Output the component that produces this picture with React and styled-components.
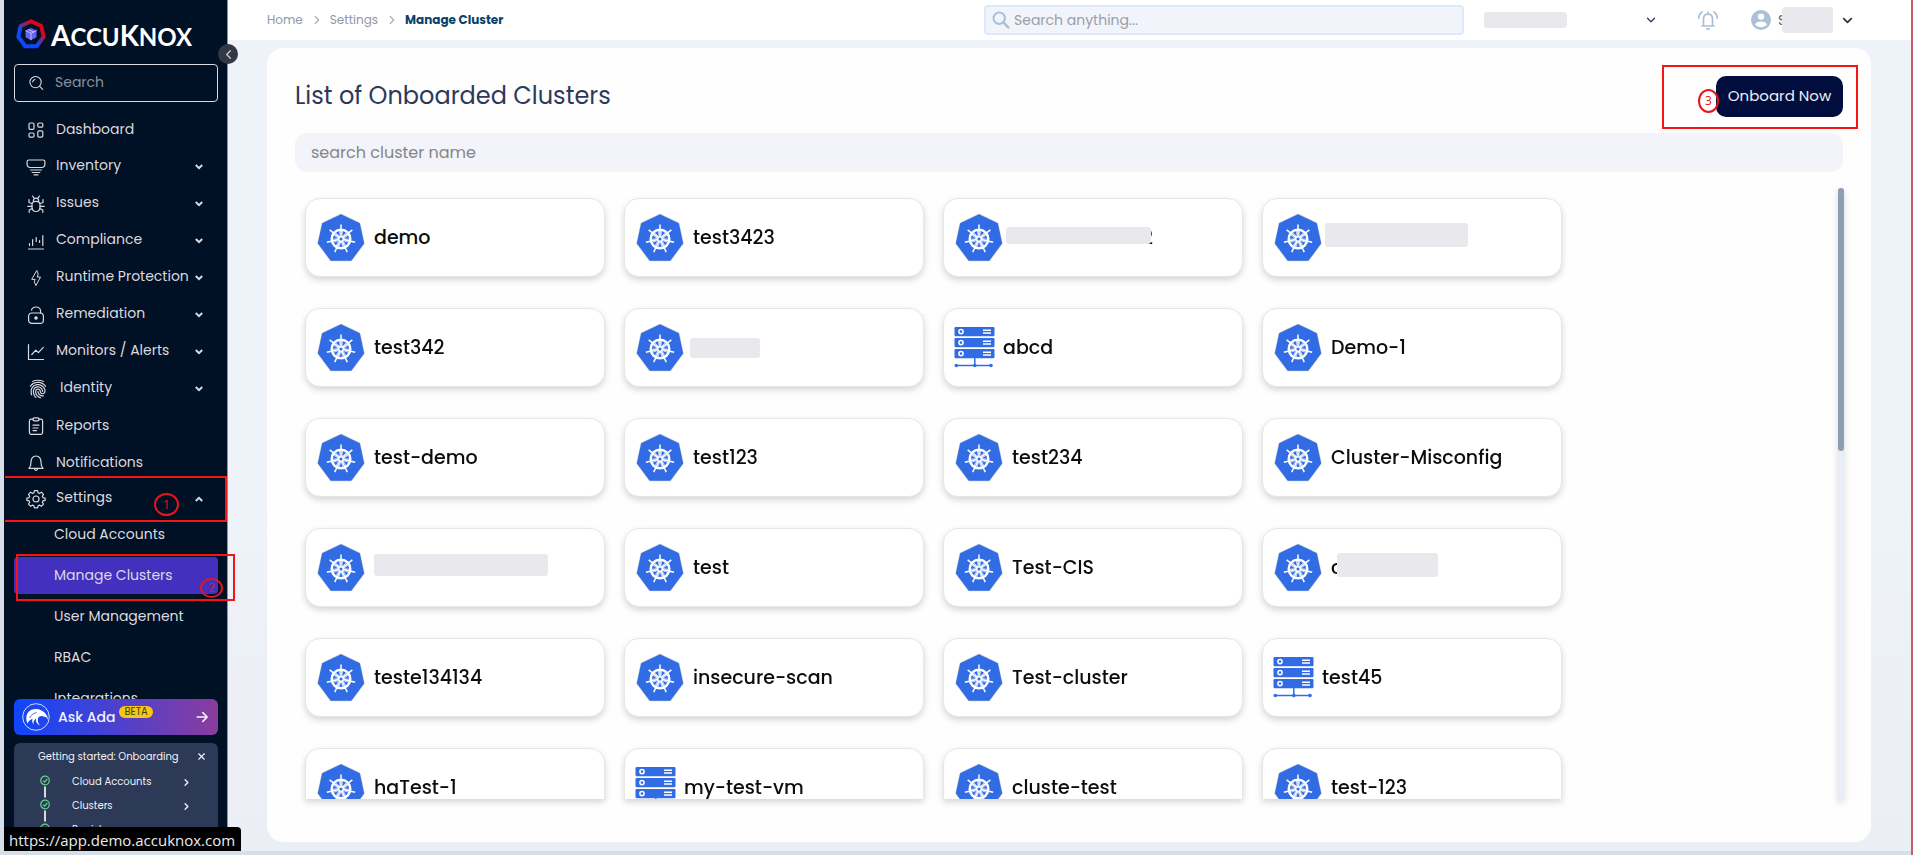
import React from "react";
import styled, { createGlobalStyle, css } from "styled-components";
import { ChevronDown, ChevronLeft, ChevronRight, X } from "lucide-react";
import { IoFingerPrint } from "react-icons/io5";

const GlobalStyle = createGlobalStyle`
  *, *::before, *::after { box-sizing: border-box; }
  body {
    margin: 0;
    font-family: Poppins, Inter, "Liberation Sans", sans-serif;
    background: #d6dfe9;
  }
  button, input { font-family: inherit; }
  a { color: inherit; text-decoration: none; }
  ul, ol { list-style: none; margin: 0; padding: 0; }
`;

const Frame = styled.div`
  display: flex;
  height: 100vh;
  padding: 0 0 4px 4px;
  border-right: 2px solid #c65c6a;
  background: #d6dfe9;
`;

/* ---------- annotations ---------- */

const MarkBox = styled.span`
  position: absolute;
  z-index: 3;
  inset: ${(p) => p.$inset};
  border: 2px solid #f81414;
  border-left-width: ${(p) => (p.$openLeft ? 0 : 2)}px;
  pointer-events: none;
`;

const MarkNumber = styled.span`
  position: absolute;
  z-index: 3;
  left: ${(p) => p.$left}px;
  top: ${(p) => p.$top}px;
  width: ${(p) => p.$width}px;
  height: ${(p) => p.$height}px;
  display: flex;
  align-items: center;
  justify-content: center;
  border: 2px solid #e8141c;
  border-radius: 50%;
  color: #e8141c;
  font-family: "Open Sans", sans-serif;
  font-size: 12px;
  line-height: 12px;
  pointer-events: none;
`;

const Redaction = styled.span`
  width: ${(p) => p.$width}px;
  height: ${(p) => p.$height}px;
  border-radius: 3px;
  background: #e9e8ed;
  ${(p) =>
    p.$left !== undefined &&
    css`
      position: absolute;
      left: ${p.$left}px;
      top: ${p.$top}px;
    `}
`;

/* ---------- sidebar ---------- */

const Sidebar = styled.aside`
  position: relative;
  flex: none;
  width: 224px;
  display: flex;
  flex-direction: column;
  padding: 19px 9px 0 10px;
  background: #001025;
  border-right: 1px solid #8a93a3;
  color: #dcd9df;
`;

const Brand = styled.a`
  display: flex;
  align-items: center;
  gap: 5px;
  height: 30px;
  margin: 0 0 15px 2px;
  color: #fff;
  font-family: Lato, sans-serif;
  font-weight: 700;
  font-size: 24px;
  line-height: 30px;
  text-transform: uppercase;
`;

const BrandText = styled.span`
  padding-top: 3px;
`;

const BigLetter = styled.span`
  font-size: 28px;
`;

const Collapse = styled.button`
  position: absolute;
  z-index: 4;
  right: -11px;
  top: 44px;
  width: 20px;
  height: 20px;
  display: flex;
  align-items: center;
  justify-content: center;
  padding: 0;
  border: 0;
  border-radius: 50%;
  background: #333845;
  color: #c9ccd3;
`;

const MenuSearch = styled.label`
  flex: none;
  display: flex;
  align-items: center;
  gap: 10px;
  height: 38px;
  margin-bottom: 9px;
  padding: 0 12px;
  border: 1px solid #d9dbe0;
  border-radius: 4px;
`;

const MenuSearchInput = styled.input`
  flex: 1;
  min-width: 0;
  padding: 0 0 2px;
  border: 0;
  outline: 0;
  background: none;
  color: #fff;
  font-size: 14px;
  &::placeholder { color: #8b919c; opacity: 1; }
`;

/* Wider than the sidebar on the right, so that marks may reach past its edge. */
const Nav = styled.nav`
  flex: 1;
  min-height: 0;
  margin: 0 -30px 0 -10px;
  padding: 0 30px 0 10px;
  overflow: hidden;
`;

const NavItem = styled.li`
  position: relative;
`;

const NavHead = styled.div`
  position: relative;
`;

const rowStyle = css`
  display: flex;
  align-items: center;
  gap: 10px;
  width: 100%;
  height: ${(p) => (p.$open ? 35 : 37)}px;
  padding: 0 15px 0 12px;
  border: 0;
  background: none;
  color: inherit;
  font-size: 14px;
  text-align: left;
`;

const NavLink = styled.a`${rowStyle}`;
const NavButton = styled.button`${rowStyle}`;

const NavLabel = styled.span`
  flex: 1;
  min-width: 0;
  white-space: nowrap;
  padding-bottom: ${(p) => (p.$raised ? 3 : 0)}px;
`;

const SubList = styled.ul`
  display: flex;
  flex-direction: column;
  gap: 4px;
`;

const SubLink = styled.a`
  display: flex;
  align-items: center;
  height: 37px;
  padding-left: 40px;
  border-radius: 4px;
  font-size: 14px;
  background: ${(p) => (p.$active ? "#4430bf" : "none")};
`;

const AskAda = styled.button`
  flex: none;
  display: flex;
  align-items: center;
  height: 36px;
  margin-bottom: 8px;
  padding: 0 8px;
  border: 0;
  border-radius: 6px;
  background: linear-gradient(90deg, #0f46fd 0%, #3f42d8 40%, #8b3c9d 100%);
  color: #f3f0fa;
  font-size: 14px;
  font-weight: 500;
`;

const AskLabel = styled.span`
  margin: 0 4px 0 8px;
`;

const Beta = styled.span`
  align-self: flex-start;
  margin: 7px auto 0 0;
  padding: 0 5px;
  border-radius: 6px;
  background: #f6c815;
  color: #3d3a20;
  font-size: 10px;
  font-weight: 400;
  line-height: 12px;
`;

const Onboarding = styled.section`
  flex: none;
  height: 108px;
  overflow: hidden;
  padding: 4px 11px 0 24px;
  border-radius: 6px 6px 0 0;
  background: #2c3957;
  color: #f0f1f5;
`;

const OnboardingHead = styled.header`
  display: flex;
  align-items: center;
  justify-content: space-between;
  height: 19px;
`;

const OnboardingTitle = styled.h2`
  margin: 0;
  font-size: 10px;
  font-weight: 400;
  white-space: nowrap;
`;

const PlainButton = styled.button`
  display: flex;
  padding: 0;
  border: 0;
  background: none;
  color: inherit;
`;

const Steps = styled.ol`
  padding: 9px 0 0 2px;
`;

const Step = styled.li`
  display: flex;
  align-items: flex-start;
  height: 24px;
  font-size: 10px;
`;

const StepLink = styled.a`
  flex: 1;
  display: flex;
  align-items: center;
  justify-content: space-between;
  height: 14px;
  padding: 0 15px 0 22px;
`;

const UrlTip = styled.div`
  position: absolute;
  z-index: 5;
  left: 0;
  bottom: 0;
  height: 24px;
  padding: 0 6px 0 5px;
  border-radius: 0 4px 0 0;
  background: #000;
  color: #ececec;
  font-family: "Open Sans", sans-serif;
  font-size: 15px;
  line-height: 26px;
  white-space: nowrap;
`;

/* ---------- main area ---------- */

const Main = styled.main`
  flex: 1;
  min-width: 0;
  display: flex;
  flex-direction: column;
  background: linear-gradient(180deg, #eff3f9 0%, #eef2f9 60%, #ebeef4 100%);
`;

const TopBar = styled.header`
  flex: none;
  display: flex;
  align-items: center;
  height: 40px;
  padding: 0 56px 0 39px;
  background: #fff;
`;

const CrumbNav = styled.nav`
  margin-right: auto;
`;

const Crumbs = styled.ol`
  display: flex;
  align-items: center;
  font-size: 12px;
  color: #8f99a8;
`;

const Crumb = styled.li`
  display: flex;
  align-items: center;
  color: ${(p) => (p.$current ? "#0b426d" : "inherit")};
  font-weight: ${(p) => (p.$current ? 700 : 400)};
  & > svg { margin: 0 6px 0 7px; color: #a3afc0; }
`;

const GlobalSearch = styled.label`
  display: flex;
  align-items: center;
  gap: 4px;
  width: 480px;
  height: 30px;
  padding: 0 6px;
  border: 2px solid #dfe9fd;
  border-radius: 4px;
  background: #f1f4fa;
`;

const GlobalInput = styled.input`
  flex: 1;
  min-width: 0;
  padding: 0;
  border: 0;
  outline: 0;
  background: none;
  font-size: 14px;
  &::placeholder { color: #9a9ea6; opacity: 1; }
`;

const TenantButton = styled.button`
  display: flex;
  align-items: center;
  justify-content: space-between;
  width: 174px;
  margin-left: 20px;
  padding: 0;
  border: 0;
  background: none;
  color: #2c3a5a;
`;

const BellButton = styled(PlainButton)`
  margin-left: 40px;
  color: #abc0d6;
`;

const UserButton = styled(PlainButton)`
  position: relative;
  align-items: center;
  margin-left: 33px;
  color: #333;
  font-size: 14px;
  & > svg:last-child { margin-left: 7px; }
`;

const Initial = styled.span`
  width: 11px;
  padding-left: 7px;
  overflow: hidden;
  color: #666;
`;

const Panel = styled.section`
  flex: 1;
  min-height: 0;
  display: flex;
  flex-direction: column;
  margin: 8px 40px 9px 39px;
  padding: 28px 28px 43px;
  border-radius: 16px;
  background: #fefefe;
`;

const PanelHead = styled.header`
  flex: none;
  display: flex;
  align-items: center;
  justify-content: space-between;
  height: 41px;
  margin-bottom: 16px;
`;

const Title = styled.h1`
  margin: 0;
  padding-bottom: 2px;
  color: #2c395b;
  font-size: 24px;
  font-weight: 400;
`;

const OnboardArea = styled.div`
  position: relative;
`;

const OnboardButton = styled.button`
  display: block;
  width: 127px;
  height: 41px;
  padding: 0 0 2px;
  border: 0;
  border-radius: 10px;
  background: #010d3d;
  color: #eceef4;
  font-size: 15px;
  font-weight: 400;
  white-space: nowrap;
`;

const ClusterSearch = styled.input`
  flex: none;
  height: 39px;
  margin-bottom: 16px;
  padding: 0 16px;
  border: 0;
  border-radius: 12px;
  background: #f3f4f9;
  font-size: 16px;
  &::placeholder { color: #858589; opacity: 1; }
`;

const ListArea = styled.div`
  flex: 1;
  min-height: 0;
  display: flex;
  filter: drop-shadow(0 3px 3px rgba(0, 0, 0, 0.16));
`;

const ClusterGrid = styled.ul`
  flex: 1;
  display: grid;
  grid-template-columns: repeat(auto-fill, 300px);
  grid-auto-rows: 79px;
  gap: 31px 19px;
  padding: 10px 0 0 10px;
  overflow-y: auto;
  scrollbar-width: none;
`;

const ClusterCard = styled.li`
  display: flex;
  align-items: center;
  gap: ${(p) => (p.$vm ? 8 : 9)}px;
  padding: 0 ${(p) => (p.$vm ? 10 : 11)}px;
  border: 1px solid #e6e6e6;
  border-radius: 15px;
  background: #fff;
`;

const ClusterName = styled.span`
  position: relative;
  min-height: 24px;
  line-height: 24px;
  color: #0d0d0d;
  font-size: 19px;
  font-weight: 500;
  white-space: nowrap;
`;

const HiddenName = styled.span`
  display: inline-block;
  width: 130px;
`;

const Track = styled.div`
  flex: none;
  width: 6px;
  margin-right: -1px;
  background: #e9eef6;
`;

const Thumb = styled.div`
  height: 43%;
  border-radius: 3px;
  background: #8c9db4;
`;

/* ---------- drawings ---------- */

function Glyph({ size = 20, children, width = 1.2 }) {
  return (
    <svg
      width={size}
      height={size}
      viewBox="0 0 20 20"
      fill="none"
      stroke="currentColor"
      strokeWidth={width}
      strokeLinecap="round"
      strokeLinejoin="round"
      aria-hidden="true"
    >
      {children}
    </svg>
  );
}

const FingerIcon = styled(IoFingerPrint)`
  flex: none;
  margin: 2px;
`;

const icons = {
  dashboard: (
    <Glyph>
      <rect x="3" y="3" width="5" height="6.4" rx="1.2" />
      <rect x="11.8" y="3" width="5" height="4.2" rx="1.2" />
      <rect x="3" y="13" width="5" height="4.2" rx="1.2" />
      <rect x="11.8" y="10.8" width="5" height="6.4" rx="1.2" />
    </Glyph>
  ),
  inventory: (
    <Glyph>
      <path d="M2.8 3h14.4c1.100 0 1.700.6 1.700 1.600v2.400c0 2.300-1.100 3.500-3.200 3.500H4.300C2.200 10.500 1.100 9.300 1.100 7V4.600C1.100 3.600 1.700 3 2.800 3z" />
      <path d="M4.500 13h11M6.200 15.500h7.600M8 17.800h4" />
    </Glyph>
  ),
  issues: (
    <Glyph>
      <path d="M6 10.500c0-2 1.400-3.200 4-3.200s4 1.200 4 3.200v2.800c0 2.500-1.600 4.200-4 4.200s-4-1.700-4-4.200z" />
      <path d="M7.300 7.200c0-2 1-3 2.700-3s2.700 1 2.700 3M8.200 4.300 6.600 2M11.800 4.300 13.400 2" />
      <path d="M6 9.500 3 8.500V5.500M14 9.500l3-1V5.500M6 12.300H1.800M14 12.300h4.200M6.300 14.600 3.200 16v2.300M13.700 14.600l3.100 1.400v2.300" />
    </Glyph>
  ),
  compliance: (
    <Glyph>
      <path d="M3.500 12.500v2M6.600 8.500v6M10.200 6.500v4M13.600 9.500v2M16.800 4.500v10" />
      <path d="M2.500 18h15" />
    </Glyph>
  ),
  runtime: (
    <Glyph width={1}>
      <path d="M10.600 2.800 5.700 11.400h3.500L8.300 13.800l1.600 3.800 4.600-8.600h-3.300l.9-2.600z" />
    </Glyph>
  ),
  remediation: (
    <Glyph>
      <rect x="2.600" y="8" width="14.800" height="10.400" rx="3.200" />
      <path d="M5.500 5.200C6 3.200 7.600 2 10 2c2.700 0 4.400 1.600 4.600 4v2" />
      <circle cx="10" cy="13" r="1.200" fill="currentColor" />
    </Glyph>
  ),
  monitors: (
    <Glyph>
      <path d="M2.500 2.500v15h15" />
      <path d="m5.800 12.500 4-4.300 2.600 2.400 4.900-5.200" />
    </Glyph>
  ),
  identity: <FingerIcon size={20} aria-hidden="true" />,
  reports: (
    <Glyph>
      <path d="M7 3.200H5.200c-1 0-1.800.7-1.800 1.700v11.700c0 1 .8 1.700 1.800 1.700h9.600c1 0 1.800-.7 1.800-1.700V4.900c0-1-.8-1.700-1.800-1.700H13" />
      <rect x="7" y="1.900" width="6" height="3" rx="1.300" />
      <path d="M7 9.200h6M7 12h5M7 14.600h3.500" />
    </Glyph>
  ),
  notifications: (
    <Glyph>
      <path d="M3 15.300c1.500-1.300 1.900-2.500 1.900-5.200 0-4.200 1.900-7.100 5.100-7.100s5.100 2.900 5.100 7.100c0 2.700.4 3.900 1.900 5.200z" />
      <path d="M8.300 15.500c.2 1.300.8 1.900 1.700 1.900s1.500-.6 1.700-1.900" />
    </Glyph>
  ),
  settings: (
    <Glyph>
      <circle cx="10" cy="10" r="3" />
      <path d="m8.400 1.600h3.200l.5 2.200 1.300.6 1.900-1.200 2.200 2.200-1.200 1.900.6 1.300 2.200.5v2.300l-2.200.5-.6 1.300 1.200 1.900-2.200 2.200-1.900-1.200-1.300.6-.5 2.200H8.400l-.5-2.200-1.300-.6-1.900 1.200-2.200-2.200 1.200-1.900-.6-1.300-2.200-.5V9.100l2.200-.5.6-1.300-1.200-1.900 2.200-2.200 1.900 1.200 1.300-.6z" />
    </Glyph>
  ),
};

function Caret({ up }) {
  return (
    <svg width="8" height="6" viewBox="0 0 8 6" fill="none" stroke="currentColor" strokeWidth="2" aria-hidden="true">
      <path d={up ? "M.8 5 4 1.800 7.200 5" : "M.8 1 4 4.200 7.200 1"} />
    </svg>
  );
}

function BrandMark() {
  return (
    <svg width="30" height="30" viewBox="0 0 30 30" aria-hidden="true">
      <defs>
        <linearGradient id="brandRing" x1="0.850" y1="0.150" x2="0.250" y2="0.850">
          <stop offset="0.200" stopColor="#d8061c" />
          <stop offset="0.450" stopColor="#6a2f8c" />
          <stop offset="0.750" stopColor="#0a49ff" />
        </linearGradient>
      </defs>
      <path
        d="M15 2.200 25.300 7 27.700 17.800 20.700 27.200H9.300L2.300 17.800 4.700 7z"
        fill="none"
        stroke="url(#brandRing)"
        strokeWidth="4"
        strokeLinejoin="round"
      />
      <path d="m15 9 5.500 2.600v6.700L15 21.200l-5.500-2.900v-6.700z" fill="#6462f2" />
      <path d="m9.500 11.600 5.500 2.700 5.500-2.700M15 14.300v6.900M12 10.400l5.600 2.600" fill="none" stroke="#c9c8ff" strokeWidth="0.900" />
    </svg>
  );
}

function AdaMark() {
  return (
    <svg width="28" height="28" viewBox="0 0 28 28" fill="none" aria-hidden="true">
      <circle cx="14" cy="14" r="13.300" stroke="#cfd8ff" strokeWidth="1" />
      <path d="M5.500 20.500C3 15 4.500 9 9 7c5-2.200 12-.5 15.500 5 1 1.700 1.500 3 1.300 5-.5-2-1.500-3-3-3.300-1 .2-1.500-.2-2.300-.7-2.500-.2-4.500.8-4.700 3.500-.1 2 .6 4.200 2.100 6-3-1.500-4.500-4-3.900-7-2 1.500-3 3.500-2.500 6-1.300-1.700-1.700-3.500-1-6-2 1.200-4 2.500-5 5z" fill="#fff" />
      <path d="M7.500 15c1-2.500 3.500-4.500 7-5.500" stroke="#4b61e8" strokeWidth="0.900" />
    </svg>
  );
}

function StepMark() {
  return (
    <svg width="10" height="24" viewBox="0 0 10 24" fill="none" aria-hidden="true">
      <path d="M5 11.500v11" stroke="#e8eaef" strokeWidth="1.800" />
      <circle cx="5" cy="5.500" r="4.300" stroke="#5fd38d" strokeWidth="1.200" />
      <path d="m3 5.700 1.500 1.500L7.300 4" stroke="#5fd38d" strokeWidth="1.200" />
    </svg>
  );
}

const SPOKES = Array.from({ length: 7 }, (_, i) => (i * 360) / 7);
const HEPTAGON = "M24 2.200 42 10.800 46.200 30.200 33.900 46.800H14.100L1.800 30.200 6 10.800z";

function KubernetesMark() {
  return (
    <svg width="48" height="50" viewBox="0 0 48 50" aria-hidden="true">
      <path d={HEPTAGON} fill="#326ce5" stroke="#cfd2d8" strokeWidth="3" strokeLinejoin="round" />
      <path d={HEPTAGON} fill="#326ce5" stroke="#326ce5" strokeWidth="1.800" strokeLinejoin="round" />
      <g stroke="#fff" fill="none" transform="translate(24 26)">
        <circle r="9.300" strokeWidth="2.400" />
        {SPOKES.map((angle) => (
          <g key={angle} transform={`rotate(${angle})`}>
            <path d="M0-2.500V-14.500" strokeWidth="1.500" />
            <path d="M-1-2.800-1.600-8.800M1-2.800 1.600-8.800" strokeWidth="0.700" />
          </g>
        ))}
        <circle r="2.300" strokeWidth="1.500" />
      </g>
    </svg>
  );
}

function ServerMark() {
  return (
    <svg width="41" height="41" viewBox="0 0 41 41" aria-hidden="true">
      {[0, 11, 22].map((y) => (
        <g key={y} transform={`translate(0 ${y})`}>
          <rect x="0.500" width="40" height="9.200" rx="1.200" fill="#326ce5" />
          <circle cx="7" cy="4.600" r="2.100" fill="none" stroke="#fff" strokeWidth="1.500" />
          <path d="M29 3.200h8M29 6h8" stroke="#fff" strokeWidth="1.400" />
        </g>
      ))}
      <path d="M20.800 31v7M2 38.500h36" stroke="#326ce5" strokeWidth="1.500" />
      <circle cx="2.300" cy="38.500" r="1.800" fill="#326ce5" />
      <circle cx="20.800" cy="38.500" r="1.800" fill="#326ce5" />
      <circle cx="37" cy="38.500" r="1.800" fill="#326ce5" />
    </svg>
  );
}

/* ---------- data ---------- */

const navItems = [
  { icon: "dashboard", label: "Dashboard" },
  { icon: "inventory", label: "Inventory", group: true },
  { icon: "issues", label: "Issues", group: true },
  { icon: "compliance", label: "Compliance", group: true },
  { icon: "runtime", label: "Runtime Protection", group: true },
  { icon: "remediation", label: "Remediation", group: true },
  { icon: "monitors", label: "Monitors / Alerts", group: true },
  { icon: "identity", label: "Identity", group: true },
  { icon: "reports", label: "Reports" },
  { icon: "notifications", label: "Notifications" },
];

const settingsLinks = [
  { label: "Cloud Accounts" },
  { label: "Manage Clusters", active: true },
  { label: "User Management" },
  { label: "RBAC" },
  { label: "Integrations" },
];

const clusters = [
  { name: "demo" },
  { name: "test3423" },
  { name: "2", lead: true, bar: { left: -6, top: 1, width: 145, height: 17 } },
  { name: "", bar: { left: -6, top: -3, width: 143, height: 24 } },
  { name: "test342" },
  { name: "", bar: { left: -3, top: 2, width: 70, height: 20 } },
  { name: "abcd", vm: true },
  { name: "Demo-1" },
  { name: "test-demo" },
  { name: "test123" },
  { name: "test234" },
  { name: "Cluster-Misconfig" },
  { name: "", bar: { left: 0, top: -2, width: 174, height: 22 } },
  { name: "test" },
  { name: "Test-CIS" },
  { name: "c", bar: { left: 6, top: -3, width: 101, height: 24 } },
  { name: "teste134134" },
  { name: "insecure-scan" },
  { name: "Test-cluster" },
  { name: "test45", vm: true },
  { name: "haTest-1" },
  { name: "my-test-vm", vm: true },
  { name: "cluste-test" },
  { name: "test-123" },
];

/* ---------- page ---------- */

function SideMenu() {
  return (
    <Sidebar>
      <Brand href="#home" aria-label="AccuKnox">
        <BrandMark />
        <BrandText>
          <BigLetter>A</BigLetter>ccu<BigLetter>K</BigLetter>nox
        </BrandText>
      </Brand>
      <Collapse aria-label="Collapse menu">
        <ChevronLeft size={15} strokeWidth={2} />
      </Collapse>
      <MenuSearch>
        <Glyph size={18}>
          <circle cx="9.500" cy="9" r="6.300" />
          <path d="m14.200 13.800 3.300 3.400M6.300 8.800c.2-1.500 1-2.400 2.500-2.800" />
        </Glyph>
        <MenuSearchInput aria-label="Search menu" placeholder="Search" />
      </MenuSearch>
      <Nav aria-label="Main">
        <ul>
          {navItems.map((item) => (
            <NavItem key={item.label}>
              {item.group ? (
                <NavButton aria-expanded="false">
                  {icons[item.icon]}
                  <NavLabel $raised>{item.label}</NavLabel>
                  <Caret />
                </NavButton>
              ) : (
                <NavLink href="#section">
                  {icons[item.icon]}
                  <NavLabel>{item.label}</NavLabel>
                </NavLink>
              )}
            </NavItem>
          ))}
          <NavItem>
            <NavHead>
              <NavButton $open aria-expanded="true">
                {icons.settings}
                <NavLabel $raised>Settings</NavLabel>
                <Caret up />
              </NavButton>
              <MarkBox $openLeft $inset="-5px -9px -6px -9px" />
              <MarkNumber $left={140} $top={12} $width={25} $height={23}>1</MarkNumber>
            </NavHead>
            <SubList>
              {settingsLinks.map((link) => (
                <NavItem key={link.label}>
                  <SubLink href="#settings" $active={link.active}>
                    {link.label}
                  </SubLink>
                  {link.active && (
                    <>
                      <MarkBox $inset="-3px -17px -7px 2px" />
                      <MarkNumber $left={186} $top={21} $width={23} $height={20}>2</MarkNumber>
                    </>
                  )}
                </NavItem>
              ))}
            </SubList>
          </NavItem>
        </ul>
      </Nav>
      <AskAda>
        <AdaMark />
        <AskLabel>Ask Ada</AskLabel>
        <Beta>BETA</Beta>
        <Glyph size={16} width={2}>
          <path d="M4 10h12.500M11 4.500l5.500 5.500-5.500 5.500" />
        </Glyph>
      </AskAda>
      <Onboarding>
        <OnboardingHead>
          <OnboardingTitle>Getting started: Onboarding</OnboardingTitle>
          <PlainButton aria-label="Close">
            <X size={11} strokeWidth={2.500} />
          </PlainButton>
        </OnboardingHead>
        <Steps>
          {["Cloud Accounts", "Clusters", "Registry"].map((label) => (
            <Step key={label}>
              <StepMark />
              <StepLink href="#step">
                {label}
                <ChevronRight size={11} strokeWidth={3} />
              </StepLink>
            </Step>
          ))}
        </Steps>
      </Onboarding>
      <UrlTip>https://app.demo.accuknox.com</UrlTip>
    </Sidebar>
  );
}

function Header() {
  return (
    <TopBar>
      <CrumbNav aria-label="Breadcrumb">
        <Crumbs>
          <Crumb>
            <a href="#home">Home</a>
            <ChevronRight size={14} />
          </Crumb>
          <Crumb>
            <a href="#settings">Settings</a>
            <ChevronRight size={14} />
          </Crumb>
          <Crumb $current aria-current="page">Manage Cluster</Crumb>
        </Crumbs>
      </CrumbNav>
      <GlobalSearch>
        <svg width="18" height="18" viewBox="0 0 18 18" fill="none" stroke="#abc0d6" aria-hidden="true">
          <circle cx="7.200" cy="7.200" r="5.700" strokeWidth="2" />
          <path d="m11.300 11.300 5 5" strokeWidth="2.600" strokeLinecap="round" />
        </svg>
        <GlobalInput aria-label="Search anything" placeholder="Search anything..." />
      </GlobalSearch>
      <TenantButton aria-label="Tenant">
        <Redaction $width={83} $height={16} />
        <ChevronDown size={14} strokeWidth={2.2} />
      </TenantButton>
      <BellButton aria-label="Notifications">
        <Glyph width={1.700}>
          <path d="M4 16h12M5.500 15.800V9c0-3 1.800-4.800 4.500-4.800s4.500 1.800 4.500 4.800v6.800M10 2.200v1.800M8.800 18.800h2.400" />
          <path d="M.8 8C1 5.200 2 3.200 4 1.800M19.200 8C19 5.200 18 3.200 16 1.800" />
        </Glyph>
      </BellButton>
      <UserButton aria-label="Account">
        <svg width="20" height="20" viewBox="0 0 20 20" aria-hidden="true">
          <circle cx="10" cy="10" r="10" fill="#abc0d6" />
          <circle cx="10" cy="6.600" r="3.200" fill="#fff" />
          <path d="M4 14.300c1-2.200 3.600-2.900 6-2.900s5 .7 6 2.900c-1.400 1.900-3.500 3-6 3s-4.600-1.100-6-3z" fill="#fff" />
        </svg>
        <Initial>S</Initial>
        <Redaction $width={51} $height={26} />
        <ChevronDown size={15} strokeWidth={2.800} />
      </UserButton>
    </TopBar>
  );
}

function ClusterList() {
  return (
    <ListArea>
      <ClusterGrid>
        {clusters.map((cluster, index) => (
          <ClusterCard key={index} $vm={cluster.vm}>
            {cluster.vm ? <ServerMark /> : <KubernetesMark />}
            <ClusterName>
              {cluster.lead && <HiddenName />}
              {cluster.name}
              {cluster.bar && (
                <Redaction
                  $left={cluster.bar.left}
                  $top={cluster.bar.top}
                  $width={cluster.bar.width}
                  $height={cluster.bar.height}
                />
              )}
            </ClusterName>
          </ClusterCard>
        ))}
      </ClusterGrid>
      <Track>
        <Thumb />
      </Track>
    </ListArea>
  );
}

export default function App() {
  return (
    <Frame>
      <GlobalStyle />
      <SideMenu />
      <Main>
        <Header />
        <Panel>
          <PanelHead>
            <Title>List of Onboarded Clusters</Title>
            <OnboardArea>
              <OnboardButton>Onboard Now</OnboardButton>
              <MarkBox $inset="-11px -15px -12px -54px" />
              <MarkNumber $left={-18} $top={13} $width={21} $height={24}>3</MarkNumber>
            </OnboardArea>
          </PanelHead>
          <ClusterSearch aria-label="Search cluster name" placeholder="search cluster name" />
          <ClusterList />
        </Panel>
      </Main>
    </Frame>
  );
}
